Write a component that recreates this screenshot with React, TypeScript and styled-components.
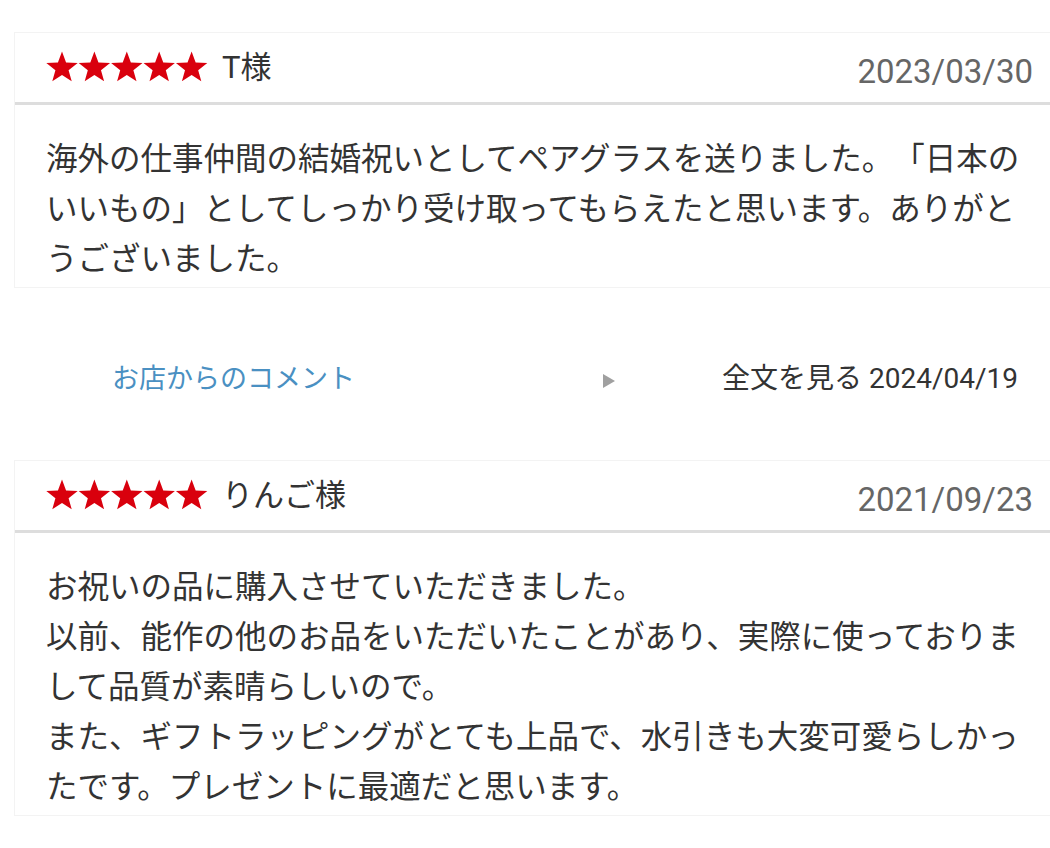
import React from 'react'
import styled, { createGlobalStyle } from 'styled-components'

const GlobalStyle = createGlobalStyle`
  html, body {
    margin: 0;
    padding: 0;
    background: #fff;
  }
  body {
    font-family: Roboto, "Noto Sans CJK JP", sans-serif;
    color: #333;
    text-spacing-trim: space-all;
  }
`

type Review = {
  name: string
  date: string
  body: string[]
  shopComment?: { date: string }
}

const reviews: Review[] = [
  {
    name: 'T様',
    date: '2023/03/30',
    body: ['海外の仕事仲間の結婚祝いとしてペアグラスを送りました。「日本のいいもの」としてしっかり受け取ってもらえたと思います。ありがとうございました。'],
    shopComment: { date: '2024/04/19' }
  },
  {
    name: 'りんご様',
    date: '2021/09/23',
    body: [
      'お祝いの品に購入させていただきました。',
      '以前、能作の他のお品をいただいたことがあり、実際に使っておりまして品質が素晴らしいので。',
      'また、ギフトラッピングがとても上品で、水引きも大変可愛らしかったです。プレゼントに最適だと思います。'
    ]
  }
]

const Page = styled.div`
  padding: 32px 0 0 14px;
  overflow: hidden;
`

const Card = styled.section`
  border: 1px solid #f3f3f3;
  border-right: none;
  margin-right: -4px;
`

const Header = styled.div`
  display: flex;
  align-items: center;
  height: 69px;
  padding: 0 21px 0 30px;
  border-bottom: 3px solid #dddddd;
`

const Stars = styled.svg`
  display: block;
  flex: none;
  margin-top: -1px;
`

const Name = styled.span`
  font-size: 31px;
  line-height: 40px;
  margin-left: 11px;
  color: #333;
`

const DateText = styled.span`
  margin-left: auto;
  margin-top: 8px;
  font-size: 33px;
  line-height: 40px;
  color: #666;
`

const Body = styled.div`
  padding: 30px 10px 2px 31px;
  font-size: 31.5px;
  line-height: 50px;
  color: #333;
`

const Para = styled.p`
  margin: 0;
`

const CommentRow = styled.div`
  display: flex;
  align-items: center;
  height: 172px;
  padding: 10px 32px 0 98px;
  box-sizing: border-box;
  font-size: 27px;
  line-height: 36px;
`

const ShopLabel = styled.span`
  width: 491px;
  color: #4a90c2;
`

const Arrow = styled.span`
  width: 0;
  height: 0;
  border-top: 7px solid transparent;
  border-bottom: 7px solid transparent;
  border-left: 12px solid #a0a0a0;
  filter: blur(0.7px);
  margin-top: 3px;
`

const ReadMore = styled.span`
  margin-left: auto;
  font-size: 28px;
  color: #333;
`

const starPoints = (cx: number, cy: number, r: number) => {
  const pts: string[] = []
  for (let i = 0; i < 10; i++) {
    const rad = i % 2 === 0 ? r : r * 0.42
    const a = -Math.PI / 2 + (i * Math.PI) / 5
    pts.push(`${(cx + rad * Math.cos(a)).toFixed(2)},${(cy + rad * Math.sin(a)).toFixed(2)}`)
  }
  return pts.join(' ')
}

const StarRating: React.FC<{ count: number }> = ({ count }) => (
  <Stars width={166} height={32} viewBox="0 0 166 32">
    <defs>
      <filter id="soft" x="-10%" y="-10%" width="120%" height="120%">
        <feGaussianBlur stdDeviation="0.7" />
      </filter>
    </defs>
    <g filter="url(#soft)" fill="#d9000f">
      {Array.from({ length: count }).map((_, i) => (
        <polygon key={i} points={starPoints(17 + i * 32.4, 17, 16.5)} />
      ))}
    </g>
  </Stars>
)

const ReviewCard: React.FC<{ review: Review }> = ({ review }) => (
  <Card>
    <Header>
      <StarRating count={5} />
      <Name>{review.name}</Name>
      <DateText>{review.date}</DateText>
    </Header>
    <Body>
      {review.body.map((p, i) => (
        <Para key={i}>{p}</Para>
      ))}
    </Body>
  </Card>
)

export default function App() {
  return (
    <>
      <GlobalStyle />
      <Page>
        {reviews.map((r, i) => (
          <React.Fragment key={i}>
            <ReviewCard review={r} />
            {r.shopComment && (
              <CommentRow>
                <ShopLabel>お店からのコメント</ShopLabel>
                <Arrow />
                <ReadMore>全文を見る {r.shopComment.date}</ReadMore>
              </CommentRow>
            )}
          </React.Fragment>
        ))}
      </Page>
    </>
  )
}
